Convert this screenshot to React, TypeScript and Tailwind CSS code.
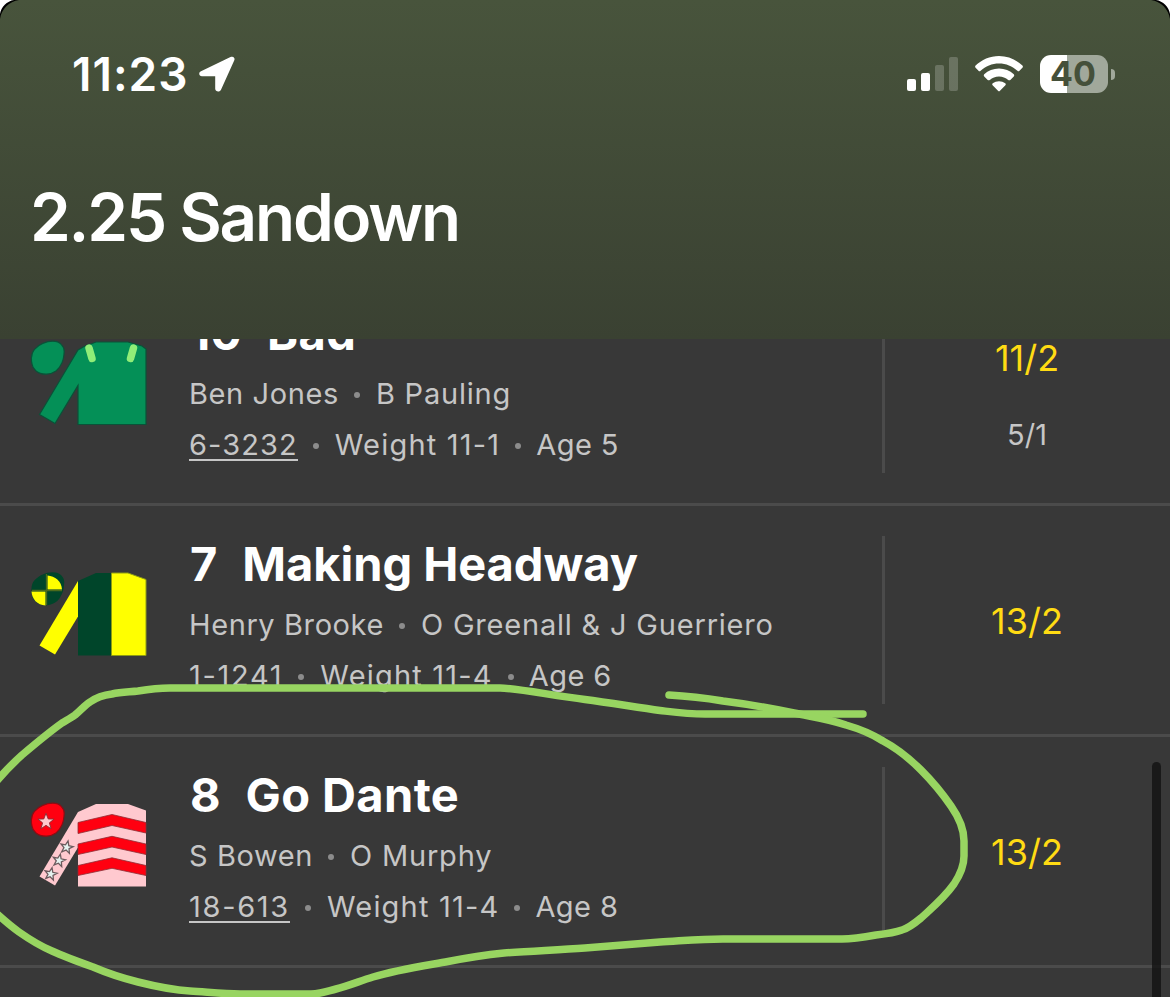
import type { ReactNode } from "react";

const STAR = "M0 -6.5L1.7 -2.1L6.2 -2L2.6 0.9L3.9 5.4L0 2.8L-3.9 5.4L-2.6 0.9L-6.2 -2L-1.7 -2.1Z";
const BODY = "M48 10L66 2H98L116 8.5V84.5H48Z";
const SLEEVE = "M48 10L9.5 74.5L25 83.5L48 45.5Z";
const CAP =
  "M1.4 18C1.6 14.5 2.5 11.5 4.5 9.3C7 6.5 9.5 4.7 12.7 3.4C16 2 19.5 1.2 22.7 1.2C26.5 1.2 29.3 2.2 31.2 4.3C33.4 6.5 34.4 8.7 34.2 11.5C34 15.5 33.5 19.5 32 22.7C30.5 26 28.5 29.2 26 31.1C23 33.3 19.5 34.3 16 34.2C12 34.2 8.5 33.2 6 31C3.5 28.8 2.3 26.8 2 24C1.5 22 1.3 20 1.4 18Z";

function GreenSilk() {
  return (
    <g fill="#049057" stroke="#0a5238" strokeWidth="1.2">
      <path d={CAP} />
      <path d="M48 10L54 6.5L66 2H98L112 6L116 9V84.5H48V45.5L25 83.5L9.5 74.5Z" />
      <path d="M59 8L62 18.5M103.5 8L100.5 18.5" fill="none" stroke="#90ee78" strokeWidth="7.5" strokeLinecap="round" />
    </g>
  );
}

function QuarteredSilk() {
  return (
    <g>
      <path d={CAP} fill="#00452a" />
      <path d="M17.5 4.5C25 5 31.5 10 32 18.5H17.5Z" fill="#ffff00" />
      <path d="M15.5 20.5H1.5C2 28 7 34 15.5 34.5Z" fill="#ffff00" />
      <path d="M16.5 3V34M2 19.5H32" stroke="#4c6b1c" strokeWidth="1.3" />
      <path d={SLEEVE} fill="#ffff00" />
      <path d={BODY} fill="#00452a" />
      <path d="M81.5 2H98L116 8.5V84.5H81.5Z" fill="#ffff00" stroke="#8d9a14" strokeWidth="1" />
    </g>
  );
}

function ChevronSilk() {
  return (
    <g>
      <path d={CAP} fill="#ff0010" stroke="#8a0d14" strokeWidth="1.2" />
      <path d={STAR} transform="translate(16 19.7) scale(1.3)" fill="#ffc9ce" stroke="#8a3036" strokeWidth="0.7" />
      <path d={SLEEVE} fill="#ffc9cf" />
      <path d={BODY} fill="#ffc9cf" />
      <g fill="#ff0010" stroke="#8e2f36" strokeWidth="0.8">
        <path d="M48 20.5L82 12.5L116 20.5V31L82 23.5L48 31.5Z" />
        <path d="M48 42L82 34.3L116 42V52.5L82 45L48 52.5Z" />
        <path d="M48 63.5L82 55.8L116 63.5V73.5L82 66.3L48 73.5Z" />
      </g>
      <g fill="#e4f2ef" stroke="#6c5a5d" strokeWidth="1.3">
        <path d={STAR} transform="translate(36.7 45.3) rotate(12)" />
        <path d={STAR} transform="translate(29 58.5) rotate(12)" />
        <path d={STAR} transform="translate(20.7 72) rotate(12)" />
      </g>
    </g>
  );
}

type Runner = {
  number: string;
  name: string;
  jockey: string;
  trainer: string;
  form: string;
  formClass: string;
  weight: string;
  age: string;
  odds: string;
  previous?: string;
  silk: ReactNode;
};

const runners: Runner[] = [
  {
    number: "10",
    name: "Bad",
    jockey: "Ben Jones",
    trainer: "B Pauling",
    form: "6-3232",
    formClass: "mt-0.5 border-b-2 border-[#c6c6c6] leading-[28px] tracking-[1.1px]",
    weight: "Weight 11-1",
    age: "Age 5",
    odds: "11/2",
    previous: "5/1",
    silk: <GreenSilk />,
  },
  {
    number: "7",
    name: "Making Headway",
    jockey: "Henry Brooke",
    trainer: "O Greenall & J Guerriero",
    form: "1-1241",
    formClass: "tracking-[1.7px]",
    weight: "Weight 11-4",
    age: "Age 6",
    odds: "13/2",
    silk: <QuarteredSilk />,
  },
  {
    number: "8",
    name: "Go Dante",
    jockey: "S Bowen",
    trainer: "O Murphy",
    form: "18-613",
    formClass: "mt-0.5 border-b-2 border-[#c6c6c6] leading-[28px] tracking-[1.7px]",
    weight: "Weight 11-4",
    age: "Age 8",
    odds: "13/2",
    silk: <ChevronSilk />,
  },
];

function Dot() {
  return <span className="mr-4 ml-[15px] mt-0.5 size-1.5 shrink-0 rounded-full bg-[#8c8c8c]" />;
}

function RunnerRow({ runner }: { runner: Runner }) {
  return (
    <div className="flex h-[231px] shrink-0 border-b-[3px] border-[#4b4b4b]">
      <svg className="mt-[65px] ml-[30px] h-[86px] w-[118px] shrink-0" viewBox="0 0 118 86">
        {runner.silk}
      </svg>
      <div className="ml-[41px] w-[693px] shrink-0 pt-[29px] whitespace-nowrap">
        <div className="flex h-[58px] items-center pl-px text-[47px] font-bold text-white">
          <span>{runner.number}</span>
          <span className={runner.name.length > 10 ? "ml-[25px] tracking-[-0.05px]" : "ml-[25px] tracking-[0.4px]"}>
            {runner.name}
          </span>
        </div>
        <div className="mt-1.5 flex h-[51px] items-center text-[29px] text-[#c6c6c6]">
          <span className="tracking-[0.6px]">{runner.jockey}</span>
          <Dot />
          <span className="tracking-[0.8px]">{runner.trainer}</span>
        </div>
        <div className="flex h-[51px] items-center text-[29px] text-[#c6c6c6]">
          <span className={runner.formClass}>{runner.form}</span>
          <Dot />
          <span className="tracking-[1.2px]">{runner.weight}</span>
          <Dot />
          <span className="-ml-px tracking-[0.4px]">{runner.age}</span>
        </div>
      </div>
      <div className="mt-[30px] h-[168px] w-[3px] shrink-0 bg-[#4b4b4b]" />
      <div className="flex flex-1 flex-col items-center pt-[58px] pr-px text-[#ffdb13]">
        {runner.previous ? (
          <>
            <span className="h-[50px] text-[36px] leading-[50px]">{runner.odds}</span>
            <span className="mt-[27px] h-[50px] text-[29px] leading-[50px] text-[#c6c6c6]">{runner.previous}</span>
          </>
        ) : (
          <span className="mt-8 h-[50px] text-[36px] leading-[50px]">{runner.odds}</span>
        )}
      </div>
    </div>
  );
}

function StatusBar() {
  return (
    <div className="flex h-[148px] items-center pl-[72px] text-white">
      <span className="text-[46px] leading-none font-semibold tracking-[1px]">11:23</span>
      <svg className="ml-[10px] h-9 w-9" viewBox="0 0 36 36" fill="currentColor">
        <path d="M2 15.2L31.5 1.1C34.3 -0.1 36.4 1.8 35.2 4.6L22 33.8C20.8 36.6 16.3 36 16.2 32.8V20.2H3C-0.1 20.1 -0.8 16.5 2 15.2Z" />
      </svg>
      <div className="mr-[55px] ml-auto flex items-center">
        <svg className="h-9 w-[52px]" viewBox="0 0 52 36" fill="currentColor">
          <rect x="0" y="23" width="9" height="12" rx="2" />
          <rect x="14" y="17" width="9" height="18" rx="2" />
          <rect x="28" y="9" width="9" height="26" rx="2" opacity="0.2" />
          <rect x="42" y="1" width="9" height="34" rx="2" opacity="0.2" />
        </svg>
        <svg className="ml-4 h-9 w-[48px]" viewBox="0 0 48 36" fill="currentColor">
          <path d="M24 0C33 0 41.5 3.8 47.4 9.6Q48.4 10.7 47.4 11.7L44.5 14.8Q43.5 15.8 42.4 14.8C37.5 10.2 31 7.5 24 7.5C17 7.5 10.5 10.2 5.6 14.8Q4.5 15.8 3.5 14.8L0.6 11.7Q-0.4 10.7 0.6 9.6C6.5 3.8 15 0 24 0Z" />
          <path d="M24 12.6C29.7 12.6 34.9 14.8 38.8 18.3Q39.8 19.3 38.8 20.4L35.3 23.9Q34.3 24.8 33.2 23.9C30.8 21.8 27.5 20.4 24 20.4C20.5 20.4 17.2 21.8 14.8 23.9Q13.7 24.8 12.7 23.9L9.2 20.4Q8.2 19.3 9.2 18.3C13.1 14.8 18.3 12.6 24 12.6Z" />
          <path d="M24 25.2C26.3 25.2 28.5 26 30.3 27.2Q31.4 28.2 30.4 29.2L25 34.7Q24 35.7 23 34.7L17.6 29.2Q16.6 28.2 17.7 27.2C19.5 26 21.7 25.2 24 25.2Z" />
        </svg>
        <div className="ml-[17px] flex h-[38px] w-[68px] items-center justify-center rounded-[11px] bg-linear-to-r from-white from-40% to-[#a1a89b] to-40% pr-0.5 text-[34px] leading-none font-bold text-[#45503a]">
          40
        </div>
        <div className="ml-[3px] h-[11px] w-1 rounded-r-full bg-[#a1a89b]" />
      </div>
    </div>
  );
}

function Corner({ className }: { className: string }) {
  return (
    <svg className={className} viewBox="0 0 20 20">
      <path d="M0 0H19C9 1.5 1.5 9 0 19Z" fill="#000" />
      <path d="M0 0H14C7 1 1 7 0 14Z" fill="#fff" />
    </svg>
  );
}

// Hand-drawn highlight around the selected runner
function Highlight() {
  return (
    <svg
      className="pointer-events-none absolute inset-0 h-[997px] w-[1170px]"
      viewBox="0 0 1170 997"
      fill="none"
      stroke="#98d561"
      strokeWidth="7.5"
      strokeLinecap="round"
      strokeLinejoin="round"
    >
      <path d="M-4 782C5 771 12 764 22 755C35 744 48 733 62 723C67 720 71 718 75 715C81 710 85 705 90 702C97 697 104 695 112 694C121 692 130 692 138 691C150 689 158 688 170 688H500C515 688 550 695 585 699.5C612 703 640 708 660 710.5C673 712 687 714 705 714H863" />
      <path d="M669 695C688 696 705 698 723 701C747 704 770 708 794 713C813 717 829 719 846 725C860 729 872 734 883 741C898 749 910 759 921 770C933 782 942 793 951 806C958 816 964 829 964 841V856C964 865 960 875 954 884C944 898 933 907 921 918C915 923 909 928 902 930C894 933 885 934 876 935C865 937 854 939 842 939H723C700 939 680 941 660 942C635 944 610 946 585 948C558 950 530 951 504 953C485 955 466 958 448 961.5C423 966 396 970 373 977C360 981 348 986 336 989C328 991 322 994 311 994H240C224 994 207 992 190 991C172 990 154 986 138 982C122 978 107 973 93 967C79 962 65 957 52 951C40 946 29 939 19 932C12 927 6 922 -4 913" />
    </svg>
  );
}

export default function App() {
  return (
    <div className="relative flex h-[997px] w-[1170px] flex-col overflow-hidden bg-[#383838] font-['Inter',sans-serif]">
      <header className="h-[339px] shrink-0 bg-linear-to-b from-[#48543c] to-[#3a4132]">
        <StatusBar />
        <h1 className="mt-[29px] ml-[30px] text-[65.5px] leading-[82px] font-semibold tracking-[-2.2px] text-white">
          2.25 Sandown
        </h1>
      </header>
      <main className="flex flex-1 flex-col overflow-hidden">
        <div className="-mt-16 flex shrink-0 flex-col">
          {runners.map((runner) => (
            <RunnerRow key={runner.number} runner={runner} />
          ))}
        </div>
      </main>
      <div className="absolute top-[762px] right-[9px] h-[260px] w-[9px] rounded-full bg-[#111]/80" />
      <Highlight />
      <Corner className="absolute top-0 left-0 size-5" />
      <Corner className="absolute top-0 right-0 size-5 -scale-x-100" />
    </div>
  );
}
